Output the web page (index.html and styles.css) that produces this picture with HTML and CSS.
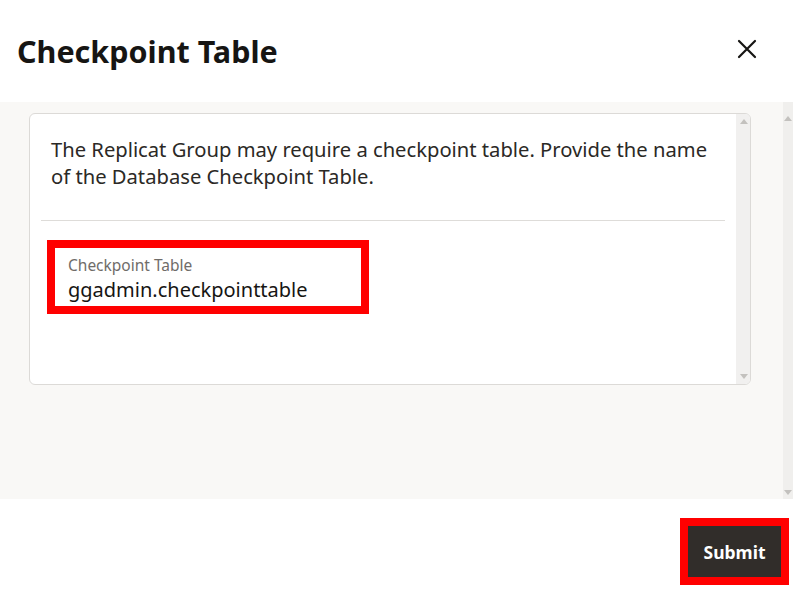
FILE: index.html
```html
<!DOCTYPE html>
<html lang="en">
<head>
<meta charset="utf-8">
<title>Checkpoint Table</title>
<link rel="stylesheet" href="styles.css">
</head>
<body>
<div class="dialog">
  <header class="dialog-header">
    <h1 class="dialog-title">Checkpoint Table</h1>
    <button class="close-btn" aria-label="Close">
      <svg width="20" height="20" viewBox="0 0 20 20"><path d="M2 2 L18 18 M18 2 L2 18" stroke="#161513" stroke-width="2.2" stroke-linecap="round" fill="none"/></svg>
    </button>
  </header>
  <div class="dialog-body">
    <div class="body-content">
      <div class="card">
        <div class="card-main">
          <p class="intro">The Replicat Group may require a checkpoint table. Provide the name of the Database Checkpoint Table.</p>
          <hr class="divider">
          <div class="field-highlight">
            <div class="field">
              <div class="field-label">Checkpoint Table</div>
              <div class="field-value">ggadmin.checkpointtable</div>
            </div>
          </div>
        </div>
        <div class="scrollbar inner-scroll">
          <span class="arrow up"></span>
          <span class="arrow down"></span>
        </div>
      </div>
    </div>
    <div class="scrollbar outer-scroll">
      <span class="arrow up"></span>
      <span class="arrow down"></span>
    </div>
  </div>
  <footer class="dialog-footer">
    <div class="btn-highlight">
      <button class="submit-btn">Submit</button>
    </div>
  </footer>
</div>
</body>
</html>
```
FILE: styles.css
```css
* { box-sizing: border-box; }
html, body { margin: 0; padding: 0; background: #fff; }
body {
  font-family: "Noto Sans", "Open Sans", sans-serif;
  color: #161513;
}
.dialog {
  width: 793px;
  height: 600px;
  display: flex;
  flex-direction: column;
}
.dialog-header {
  height: 102px;
  display: flex;
  align-items: flex-start;
  justify-content: space-between;
  padding: 0 36px 0 17px;
}
.dialog-title {
  margin: 30px 0 0 0;
  font-size: 30.5px;
  font-weight: 700;
  line-height: 42px;
  color: #161513;
}
.close-btn {
  margin-top: 39px;
  border: 0;
  background: transparent;
  padding: 0;
  width: 20px;
  height: 20px;
  display: flex;
}
.dialog-body {
  height: 397px;
  background: #f9f8f6;
  display: flex;
}
.body-content {
  flex: 1;
  padding: 11px 0 0 29px;
}
.card {
  width: 722px;
  height: 272px;
  background: #fff;
  border: 1px solid #dcdad7;
  border-radius: 6px;
  display: flex;
  overflow: hidden;
}
.card-main {
  flex: 1;
  padding: 0 11px;
}
.intro {
  margin: 22px 0 0 10px;
  font-size: 20.2px;
  line-height: 27px;
  color: #2b2926;
}
.divider {
  margin: 30px 0 19px 0;
  border: 0;
  border-top: 1px solid #dedcd9;
}
.field-highlight {
  width: 322px;
  margin-left: 6px;
  border: 8px solid #ff0000;
  background: #fff;
}
.field {
  padding: 7px 13px 0 13px;
  height: 58px;
}
.field-label {
  font-size: 15.5px;
  line-height: 20px;
  color: #6f6c69;
}
.field-value {
  margin-top: 3.5px;
  font-size: 20px;
  line-height: 22px;
  color: #161513;
}
.scrollbar {
  display: flex;
  flex-direction: column;
  justify-content: space-between;
  align-items: center;
  background: #f1f0ef;
}
.inner-scroll {
  width: 14px;
  padding: 5px 0 5px 0;
  border-left: 1px solid #f1f0ef;
}
.outer-scroll {
  width: 10px;
  padding: 14px 0 4px 0;
  background: #f0efed;
}
.arrow {
  width: 0;
  height: 0;
  border-left: 4px solid transparent;
  border-right: 4px solid transparent;
}
.arrow.up { border-bottom: 5px solid #c3c1be; }
.arrow.down { border-top: 5px solid #c3c1be; }
.dialog-footer {
  flex: 1;
  display: flex;
  justify-content: flex-end;
  align-items: flex-start;
  padding: 19px 4px 0 0;
}
.btn-highlight {
  border: 8px solid #ff0000;
}
.submit-btn {
  display: block;
  width: 93px;
  height: 51px;
  border: 0;
  background: #312d2a;
  color: #fff;
  font-family: "Noto Sans", "Open Sans", sans-serif;
  font-weight: 700;
  font-size: 17.5px;
  padding: 0;
}
```
